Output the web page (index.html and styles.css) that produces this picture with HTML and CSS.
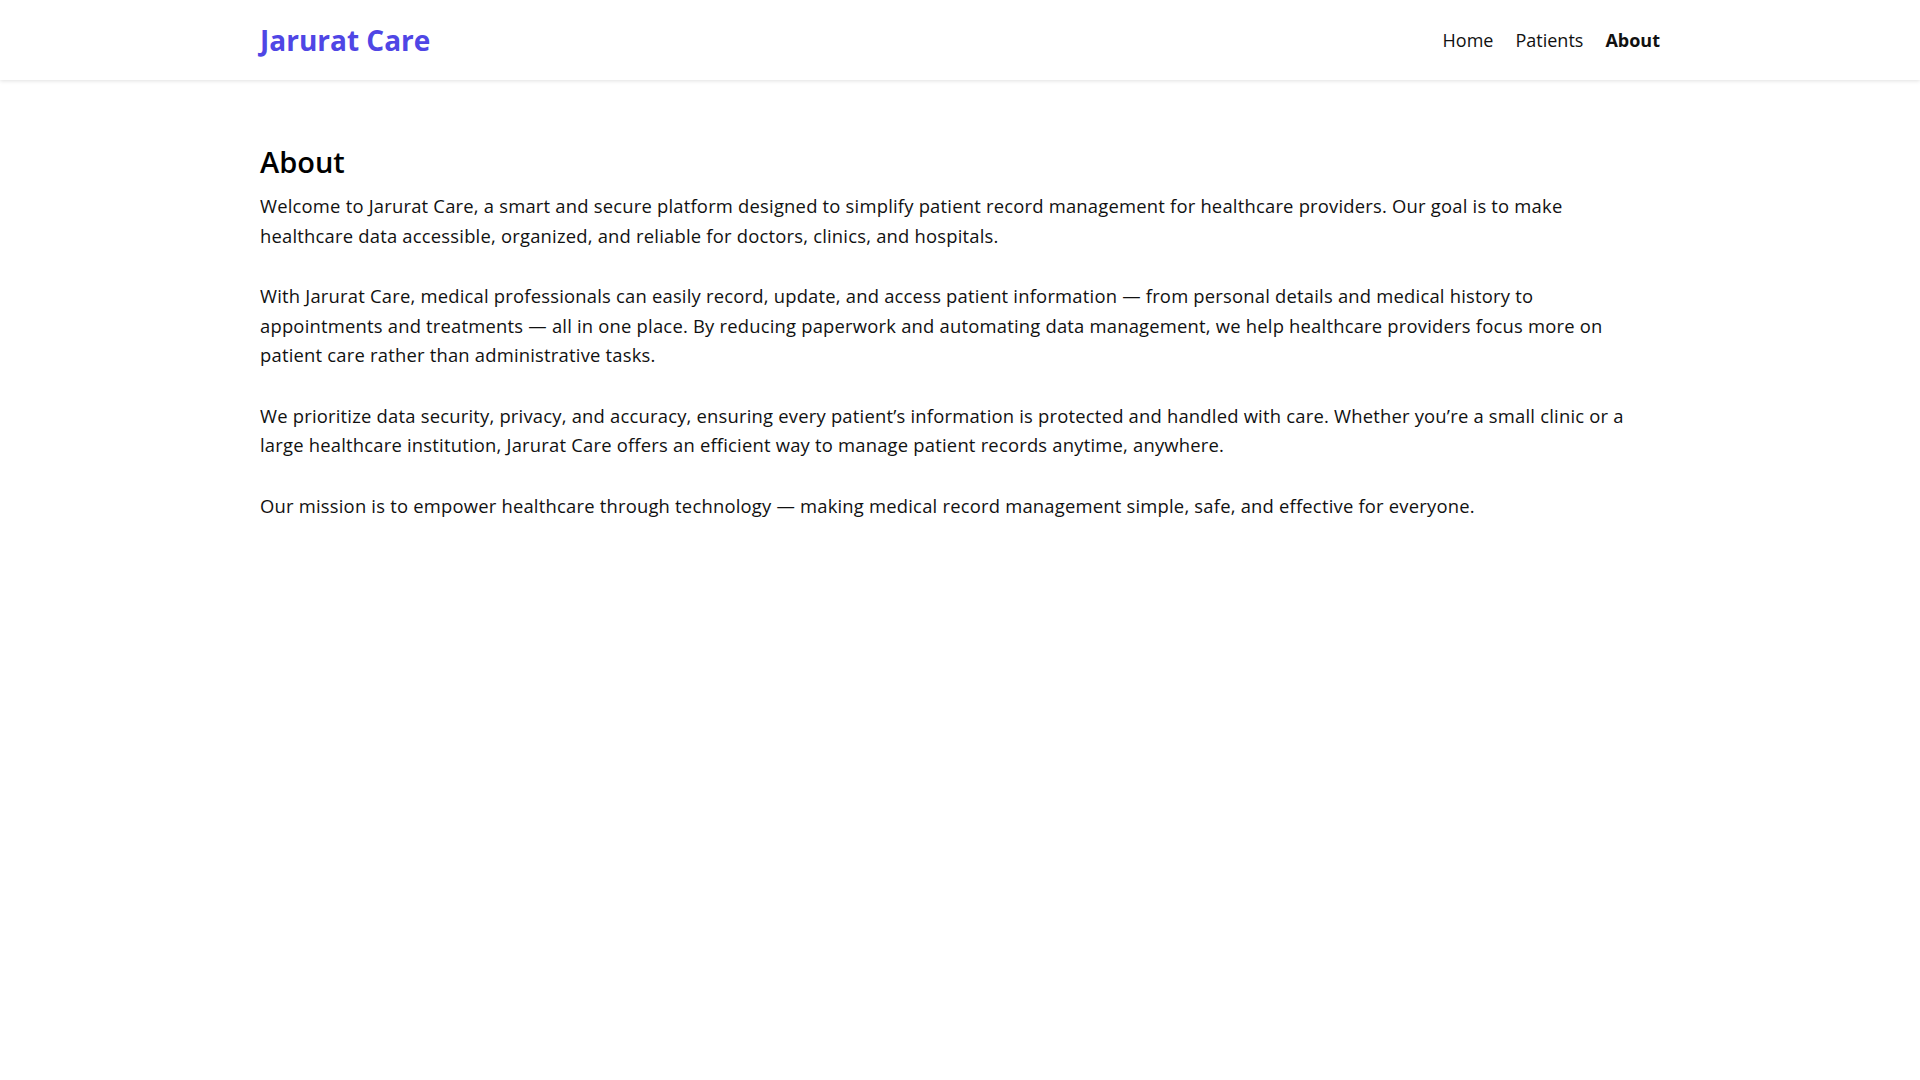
FILE: index.html
```html
<!DOCTYPE html>
<html lang="en">
<head>
<meta charset="utf-8">
<title>About - Jarurat Care</title>
<link rel="stylesheet" href="styles.css">
</head>
<body>
<header class="site-header">
  <div class="header-inner">
    <a class="logo" href="#">Jarurat Care</a>
    <nav class="nav">
      <a class="nav-link" href="#">Home</a>
      <a class="nav-link" href="#">Patients</a>
      <a class="nav-link active" href="#">About</a>
    </nav>
  </div>
</header>
<main class="content">
  <h2 class="page-title">About</h2>
  <p class="para">Welcome to Jarurat Care, a smart and secure platform designed to simplify patient record management for healthcare providers. Our goal is to make healthcare data accessible, organized, and reliable for doctors, clinics, and hospitals.</p>
  <p class="para">With Jarurat Care, medical professionals can easily record, update, and access patient information — from personal details and medical history to appointments and treatments — all in one place. By reducing paperwork and automating data management, we help healthcare providers focus more on patient care rather than administrative tasks.</p>
  <p class="para">We prioritize data security, privacy, and accuracy, ensuring every patient’s information is protected and handled with care. Whether you’re a small clinic or a large healthcare institution, Jarurat Care offers an efficient way to manage patient records anytime, anywhere.</p>
  <p class="para">Our mission is to empower healthcare through technology — making medical record management simple, safe, and effective for everyone.</p>
</main>
</body>
</html>
```
FILE: styles.css
```css
* { box-sizing: border-box; }
html, body { margin: 0; padding: 0; background: #fff; }
body {
  font-family: "Open Sans", "Noto Sans", sans-serif;
  color: #111;
}
.site-header {
  background: #fff;
  box-shadow: 0 1px 4px rgba(0, 0, 0, 0.12);
}
.header-inner {
  max-width: 1400px;
  margin: 0 auto;
  height: 80px;
  display: flex;
  align-items: center;
  justify-content: space-between;
}
.logo {
  color: #4f46e5;
  font-weight: 700;
  font-size: 28px;
  text-decoration: none;
}
.nav {
  display: flex;
  gap: 22px;
}
.nav-link {
  color: #111;
  text-decoration: none;
  font-size: 18px;
}
.nav-link.active { font-weight: 700; }
.content {
  max-width: 1400px;
  margin: 0 auto;
  padding-top: 65px;
}
.page-title {
  font-size: 29px;
  font-weight: 600;
  margin: 0 0 11px;
  line-height: 1.2;
  color: #000;
}
.para {
  font-size: 18.4px;
  letter-spacing: 0.21px;
  line-height: 29.8px;
  margin: 0 0 30.4px;
}
```
